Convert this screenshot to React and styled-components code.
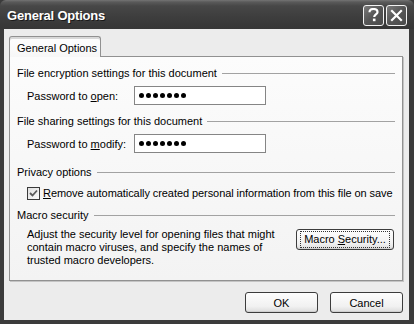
import React from "react";
import styled, { createGlobalStyle } from "styled-components";

const Global = createGlobalStyle`
  html, body { margin: 0; padding: 0; background: #3a3a3a; }
  body { width: 414px; height: 324px; overflow: hidden; }
  * { box-sizing: border-box; }
`;

const FONT = `"Liberation Sans", "DejaVu Sans", Arial, sans-serif`;

const Window = styled.div`
  width: 414px;
  height: 324px;
  display: flex;
  flex-direction: column;
  background: #3b3b3b;
  font-family: ${FONT};
  font-size: 11px;
  color: #000;
`;

const TitleBar = styled.div`
  height: 29px;
  flex: none;
  display: flex;
  align-items: center;
  justify-content: space-between;
  padding: 0 7px 0 7px;
  background: linear-gradient(#747474 0px, #5a5a5a 2px, #474747 6px, #3d3d3d 60%, #363636 100%);
  border-radius: 6px 6px 0 0;
`;

const Title = styled.div`
  color: #fff;
  font-weight: bold;
  font-size: 13px;
  letter-spacing: -0.2px;
  text-shadow: 1px 1px 0 #1a1a1a;
  padding-top: 1px;
`;

const TitleButtons = styled.div`
  display: flex;
  gap: 2px;
  margin-top: 1px;
`;

const CaptionButton = styled.div`
  width: 21px;
  height: 21px;
  border: 1px solid #f2f2f2;
  border-radius: 3px;
  background: linear-gradient(135deg, #7a7a7a 0%, #555 50%, #4a4a4a 100%);
  display: flex;
  align-items: center;
  justify-content: center;
  color: #fff;
`;

const Body = styled.div`
  flex: 1;
  margin: 0 5px 4px 4px;
  background: #ececec;
  padding: 7px 0 0 5px;
  display: flex;
  flex-direction: column;
`;

const TabStrip = styled.div`
  display: flex;
  height: 20px;
  position: relative;
  z-index: 1;
`;

const Tab = styled.div`
  width: 92px;
  height: 21px;
  background: linear-gradient(#fefefe, #f7f7f7);
  border: 1px solid #919191;
  border-bottom: none;
  border-radius: 3px 3px 0 0;
  box-shadow: inset 0 2px 0 #d8d8d8;
  display: flex;
  align-items: center;
  padding-left: 7px;
  padding-top: 1px;
`;

const Panel = styled.div`
  width: 394px;
  height: 225px;
  border: 1px solid #919191;
  background: linear-gradient(#fcfcfc, #f3f3f3);
  padding: 9px 7px 0 7px;
  display: flex;
  flex-direction: column;
  box-shadow: 1px 1px 0 #c4c4c4;
`;

const Heading = styled.div`
  display: flex;
  align-items: center;
  gap: 5px;
  height: 14px;
  line-height: 14px;
  margin-top: ${(p) => p.$mt || 0}px;
  white-space: nowrap;
`;

const Rule = styled.div`
  flex: 1;
  height: 1px;
  background: #a2a2a2;
  margin-top: 1px;
`;

const FieldRow = styled.div`
  display: flex;
  align-items: center;
  padding-left: 10px;
  margin-top: 6px;
  height: 19px;
`;

const Label = styled.label`
  width: 107px;
  flex: none;
`;

const Key = styled.span`
  text-decoration: underline;
  text-underline-offset: 1px;
`;

const PasswordBox = styled.div`
  width: 132px;
  height: 19px;
  border: 1px solid #858585;
  background: #fff;
  display: flex;
  align-items: center;
  gap: 2px;
  padding-left: 4px;
`;

const Dot = styled.span`
  width: 5px;
  height: 5px;
  border-radius: 50%;
  background: #000;
`;

const CheckRow = styled.div`
  display: flex;
  align-items: center;
  gap: 3px;
  padding-left: 10px;
  margin-top: 7px;
  height: 14px;
  white-space: nowrap;
  letter-spacing: -0.07px;
`;

const CheckBox = styled.div`
  width: 13px;
  height: 13px;
  border: 1px solid #3a3a3a;
  background: linear-gradient(135deg, #e0e0e0, #fafafa);
  display: flex;
  align-items: center;
  justify-content: center;
`;

const MacroRow = styled.div`
  display: flex;
  justify-content: space-between;
  align-items: flex-start;
  padding-left: 10px;
  padding-right: 1px;
  margin-top: 6px;
`;

const MacroText = styled.div`
  width: 250px;
  line-height: 13px;
`;

const Button = styled.button`
  font-family: ${FONT};
  font-size: 11px;
  color: #000;
  width: ${(p) => p.$w || 73}px;
  height: 21px;
  border: 1px solid #3c3c3c;
  border-radius: 3px;
  background: linear-gradient(#fdfdfd 0%, #f1f1f1 70%, #dcdcdc 100%);
  box-shadow: inset 0 -1px 0 #cfcfcf;
  padding: 0;
  display: flex;
  align-items: center;
  justify-content: center;
  margin-top: ${(p) => p.$mt || 0}px;
`;

const FocusRing = styled.span`
  border: 1px dotted #333;
  padding: 2px 3px 2px 3px;
  line-height: 11px;
`;

const ButtonRow = styled.div`
  display: flex;
  justify-content: flex-end;
  gap: 12px;
  margin-top: 11px;
  width: 394px;
`;

const dots = Array.from({ length: 7 });

export default function App() {
  return (
    <>
      <Global />
      <Window>
        <TitleBar>
          <Title>General Options</Title>
          <TitleButtons>
            <CaptionButton>
              <svg width="11" height="14" viewBox="0 0 11 14">
                <path d="M1.5 4.2 C1.5 1.8 3.2 1 5.5 1 C7.8 1 9.5 2.2 9.5 4.2 C9.5 6.4 6.2 6.6 6.2 9" fill="none" stroke="#fff" strokeWidth="2.2" />
                <rect x="4.9" y="10.6" width="2.6" height="2.6" fill="#fff" />
              </svg>
            </CaptionButton>
            <CaptionButton>
              <svg width="13" height="13" viewBox="0 0 13 13">
                <path d="M2 2 L11 11 M11 2 L2 11" stroke="#fff" strokeWidth="2.2" strokeLinecap="square" />
              </svg>
            </CaptionButton>
          </TitleButtons>
        </TitleBar>
        <Body>
          <TabStrip>
            <Tab>General Options</Tab>
          </TabStrip>
          <Panel>
            <Heading>
              File encryption settings for this document
              <Rule />
            </Heading>
            <FieldRow>
              <Label>
                Password to <Key>o</Key>pen:
              </Label>
              <PasswordBox>
                {dots.map((_, i) => (
                  <Dot key={i} />
                ))}
              </PasswordBox>
            </FieldRow>
            <Heading $mt={9}>
              File sharing settings for this document
              <Rule />
            </Heading>
            <FieldRow>
              <Label>
                Password to <Key>m</Key>odify:
              </Label>
              <PasswordBox>
                {dots.map((_, i) => (
                  <Dot key={i} />
                ))}
              </PasswordBox>
            </FieldRow>
            <Heading $mt={12}>
              Privacy options
              <Rule />
            </Heading>
            <CheckRow>
              <CheckBox>
                <svg width="9" height="9" viewBox="0 0 9 9">
                  <path d="M1 4 L3.5 6.5 L8 1.5" fill="none" stroke="#5a5a5a" strokeWidth="1.8" />
                </svg>
              </CheckBox>
              <span>
                <Key>R</Key>emove automatically created personal information from this file on save
              </span>
            </CheckRow>
            <Heading $mt={8}>
              Macro security
              <Rule />
            </Heading>
            <MacroRow>
              <MacroText>
                Adjust the security level for opening files that might contain macro viruses, and specify the names of trusted macro developers.
              </MacroText>
              <Button $w={98} $mt={1}>
                <FocusRing>
                  Macro <Key>S</Key>ecurity...
                </FocusRing>
              </Button>
            </MacroRow>
          </Panel>
          <ButtonRow>
            <Button>OK</Button>
            <Button>Cancel</Button>
          </ButtonRow>
        </Body>
      </Window>
    </>
  );
}
